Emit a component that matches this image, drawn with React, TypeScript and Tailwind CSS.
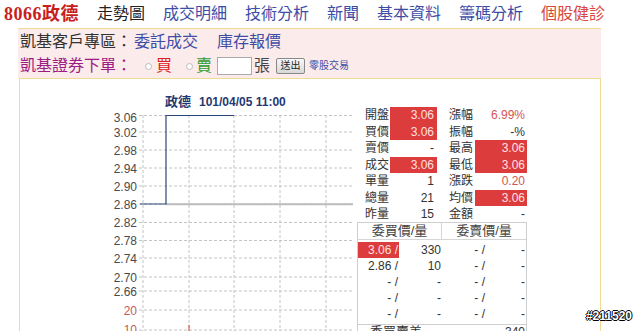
import React from 'react'

const cjk = "[font-family:'Liberation_Sans','Noto_Sans_CJK_TC',sans-serif]"

const navItems = [
  { label: '走勢圖', cls: 'text-[#222]' },
  { label: '成交明細', cls: 'text-[#3d4da6]' },
  { label: '技術分析', cls: 'text-[#3d4da6]' },
  { label: '新聞', cls: 'text-[#3d4da6]' },
  { label: '基本資料', cls: 'text-[#3d4da6]' },
  { label: '籌碼分析', cls: 'text-[#3d4da6]' },
  { label: '個股健診', cls: 'text-[#d8473d]' },
]

const quoteRows = [
  { l: '開盤', lv: '3.06', lr: true, r: '漲幅', rv: '6.99%', rr: false, rc: 'text-[#d25555]' },
  { l: '買價', lv: '3.06', lr: true, r: '振幅', rv: '-%', rr: false, rc: 'text-[#333]' },
  { l: '賣價', lv: '-', lr: false, r: '最高', rv: '3.06', rr: true, rc: '' },
  { l: '成交', lv: '3.06', lr: true, r: '最低', rv: '3.06', rr: true, rc: '' },
  { l: '單量', lv: '1', lr: false, r: '漲跌', rv: '0.20', rr: false, rc: 'text-[#d25555]' },
  { l: '總量', lv: '21', lr: false, r: '均價', rv: '3.06', rr: true, rc: '' },
  { l: '昨量', lv: '15', lr: false, r: '金額', rv: '-', rr: false, rc: 'text-[#333]' },
]

const book = [
  { bp: '3.06 /', bv: '330', hot: true },
  { bp: '2.86 /', bv: '10', hot: false },
  { bp: '- /', bv: '-', hot: false },
  { bp: '- /', bv: '-', hot: false },
  { bp: '- /', bv: '-', hot: false },
]

// label, label centre y, grid line y, volume axis?
const yLabels: [string, number, number, boolean][] = [
  ['3.06', 118, 115.5, false],
  ['3.02', 132.7, 132, false],
  ['2.98', 150.7, 150, false],
  ['2.94', 168.3, 168, false],
  ['2.90', 186.7, 186, false],
  ['2.86', 204.3, 204, false],
  ['2.82', 223, 222.5, false],
  ['2.78', 240.7, 240.5, false],
  ['2.74', 258.3, 258, false],
  ['2.70', 277.7, 277, false],
  ['2.66', 291.7, 291, false],
  ['20', 310.7, 310, true],
  ['10', 330, 330, true],
]

function Chart() {
  return (
    <svg width={257} height={252} viewBox="100 79 257 252" className="shrink-0">
      <text x={165} y={106} fontSize={13} fontWeight="bold" fill="#1f3a72" fontFamily="'Noto Sans CJK TC', sans-serif">政德</text>
      <text x={199} y={106} fontSize={12} fontWeight="bold" fill="#1f3a72" fontFamily="'Liberation Sans', sans-serif">101/04/05 11:00</text>
      {yLabels.map(([t, c, g, vol]) => (
        <g key={t}>
          <line x1={139} x2={353} y1={g} y2={g} stroke="#c4c4c4" strokeDasharray="3 2" />
          <text x={137} y={c + 4.3} fontSize={12} textAnchor="end" fill={vol ? '#c45a5a' : '#4a4a4a'} fontFamily="'Liberation Sans', sans-serif">{t}</text>
        </g>
      ))}
      {[143, 189, 234, 280, 326].map((x) => (
        <line key={x} x1={x} x2={x} y1={115} y2={331} stroke="#c4c4c4" strokeDasharray="3 2" />
      ))}
      <line x1={166} x2={353} y1={204.3} y2={204.3} stroke="#bdbdbd" strokeWidth={2} />
      <polyline points="140,204 166,204 166,115.5 234,115.5" fill="none" stroke="#2b4777" strokeWidth={1.2} />
      <line x1={189} x2={189} y1={325} y2={331} stroke="#d04040" />
    </svg>
  )
}

function QuoteTable() {
  return (
    <div className="w-[170px] mt-[28px] text-[12px]">
      {quoteRows.map((row) => (
        <div key={row.l} className="flex h-[16.5px] items-center">
          <div className="w-[33px] pl-[8px] text-[#333] whitespace-nowrap">{row.l}</div>
          <div className={`w-[47px] h-full flex items-center justify-end pr-[3px] ${row.lr ? 'bg-[#dc3c3c] text-[#ffe0e0]' : 'text-[#333]'}`}>{row.lv}</div>
          <div className="w-[4px]" />
          <div className="w-[34px] pl-[8px] text-[#333] whitespace-nowrap">{row.r}</div>
          <div className={`w-[52px] h-full flex items-center justify-end pr-[2px] ${row.rr ? 'bg-[#dc3c3c] text-[#ffe0e0]' : row.rc}`}>{row.rv}</div>
        </div>
      ))}
      <div className="mt-[-1px] border border-[#cfcfcf] text-[#333]">
        <div className="flex h-[17px] border-b border-[#d6d6d6] text-[13px] text-[#444]">
          <div className="w-[84px] border-r border-[#d6d6d6] flex items-center justify-center">委買價/量</div>
          <div className="flex-1 flex items-center justify-center">委賣價/量</div>
        </div>
        <div className="pt-[2px]">
          {book.map((b, i) => (
            <div key={i} className="flex h-[16px] items-center">
              <div className={`w-[41px] h-full flex items-center justify-end pr-[1px] ${b.hot ? 'bg-[#dc3c3c] text-[#ffe0e0]' : ''}`}>{b.bp}</div>
              <div className="w-[42px] text-right">{b.bv}</div>
              <div className="w-[44px] text-right">- /</div>
              <div className="flex-1 text-right pr-[1px]">-</div>
            </div>
          ))}
        </div>
        <div className="flex h-[16px] items-center border-t border-[#cfcfcf] mt-[2px] text-[13px]">
          <div className="pl-[12px]">委買賣差</div>
          <div className="flex-1 text-right pr-[1px] text-[12px]">340</div>
        </div>
      </div>
    </div>
  )
}

export default function App() {
  return (
    <div className={`relative w-[640px] h-[331px] overflow-hidden bg-white ${cjk}`}>
      <nav className="flex h-[28px] items-center gap-[18px] pl-[4px] text-[16px] leading-none">
        <span className="text-[18px] font-bold tracking-[0.5px] text-[#c81e1e] [font-family:'Liberation_Serif','Noto_Sans_CJK_TC',serif]">8066政德</span>
        {navItems.map((n) => (
          <span key={n.label} className={n.cls}>{n.label}</span>
        ))}
      </nav>

      <div className="ml-[18px] w-[583px] h-[50px] bg-[#fcebeb] border-t border-[#efdc92] text-[16px] leading-none">
        <div className="flex h-[25px] items-center pl-[2px]">
          <span className="text-[#333]">凱基客戶專區：</span>
          <span className="ml-[2px] text-[#3d4da6]">委託成交</span>
          <span className="ml-[19px] text-[#3d4da6]">庫存報價</span>
        </div>
        <div className="flex h-[24px] items-center pl-[2px]">
          <span className="text-[#9c1c86]">凱基證券下單：</span>
          <span className="ml-[13px] w-[7px] h-[7px] rounded-full border border-[#bbb] bg-white" />
          <span className="ml-[4px] text-[#d22]">買</span>
          <span className="ml-[14px] w-[7px] h-[7px] rounded-full border border-[#bbb] bg-white" />
          <span className="ml-[3px] text-[#2e9a2e]">賣</span>
          <span className="ml-[5px] w-[35px] h-[18px] bg-white border border-[#aaa]" />
          <span className="ml-[2px] text-[#444]">張</span>
          <span className="ml-[6px] h-[16px] w-[29px] flex items-center justify-center text-[10px] text-[#222] border border-[#888] rounded-[2px] bg-[linear-gradient(#f8f8f8,#d8d8d8)]">送出</span>
          <span className="ml-[4px] text-[10px] text-[#3d4da6]">零股交易</span>
        </div>
      </div>

      <div className="ml-[19px] w-[582px] h-[260px] border-x border-t border-[#efdc92] flex">
        <div className="ml-[80px] flex">
          <Chart />
          <QuoteTable />
        </div>
      </div>

      <div className="absolute right-[8px] bottom-[6px] text-[12px] font-bold text-white [font-family:'Liberation_Sans',sans-serif] [text-shadow:1px_0_0_#000,-1px_0_0_#000,0_1px_0_#000,0_-1px_0_#000]">
        #211520
      </div>
    </div>
  )
}
